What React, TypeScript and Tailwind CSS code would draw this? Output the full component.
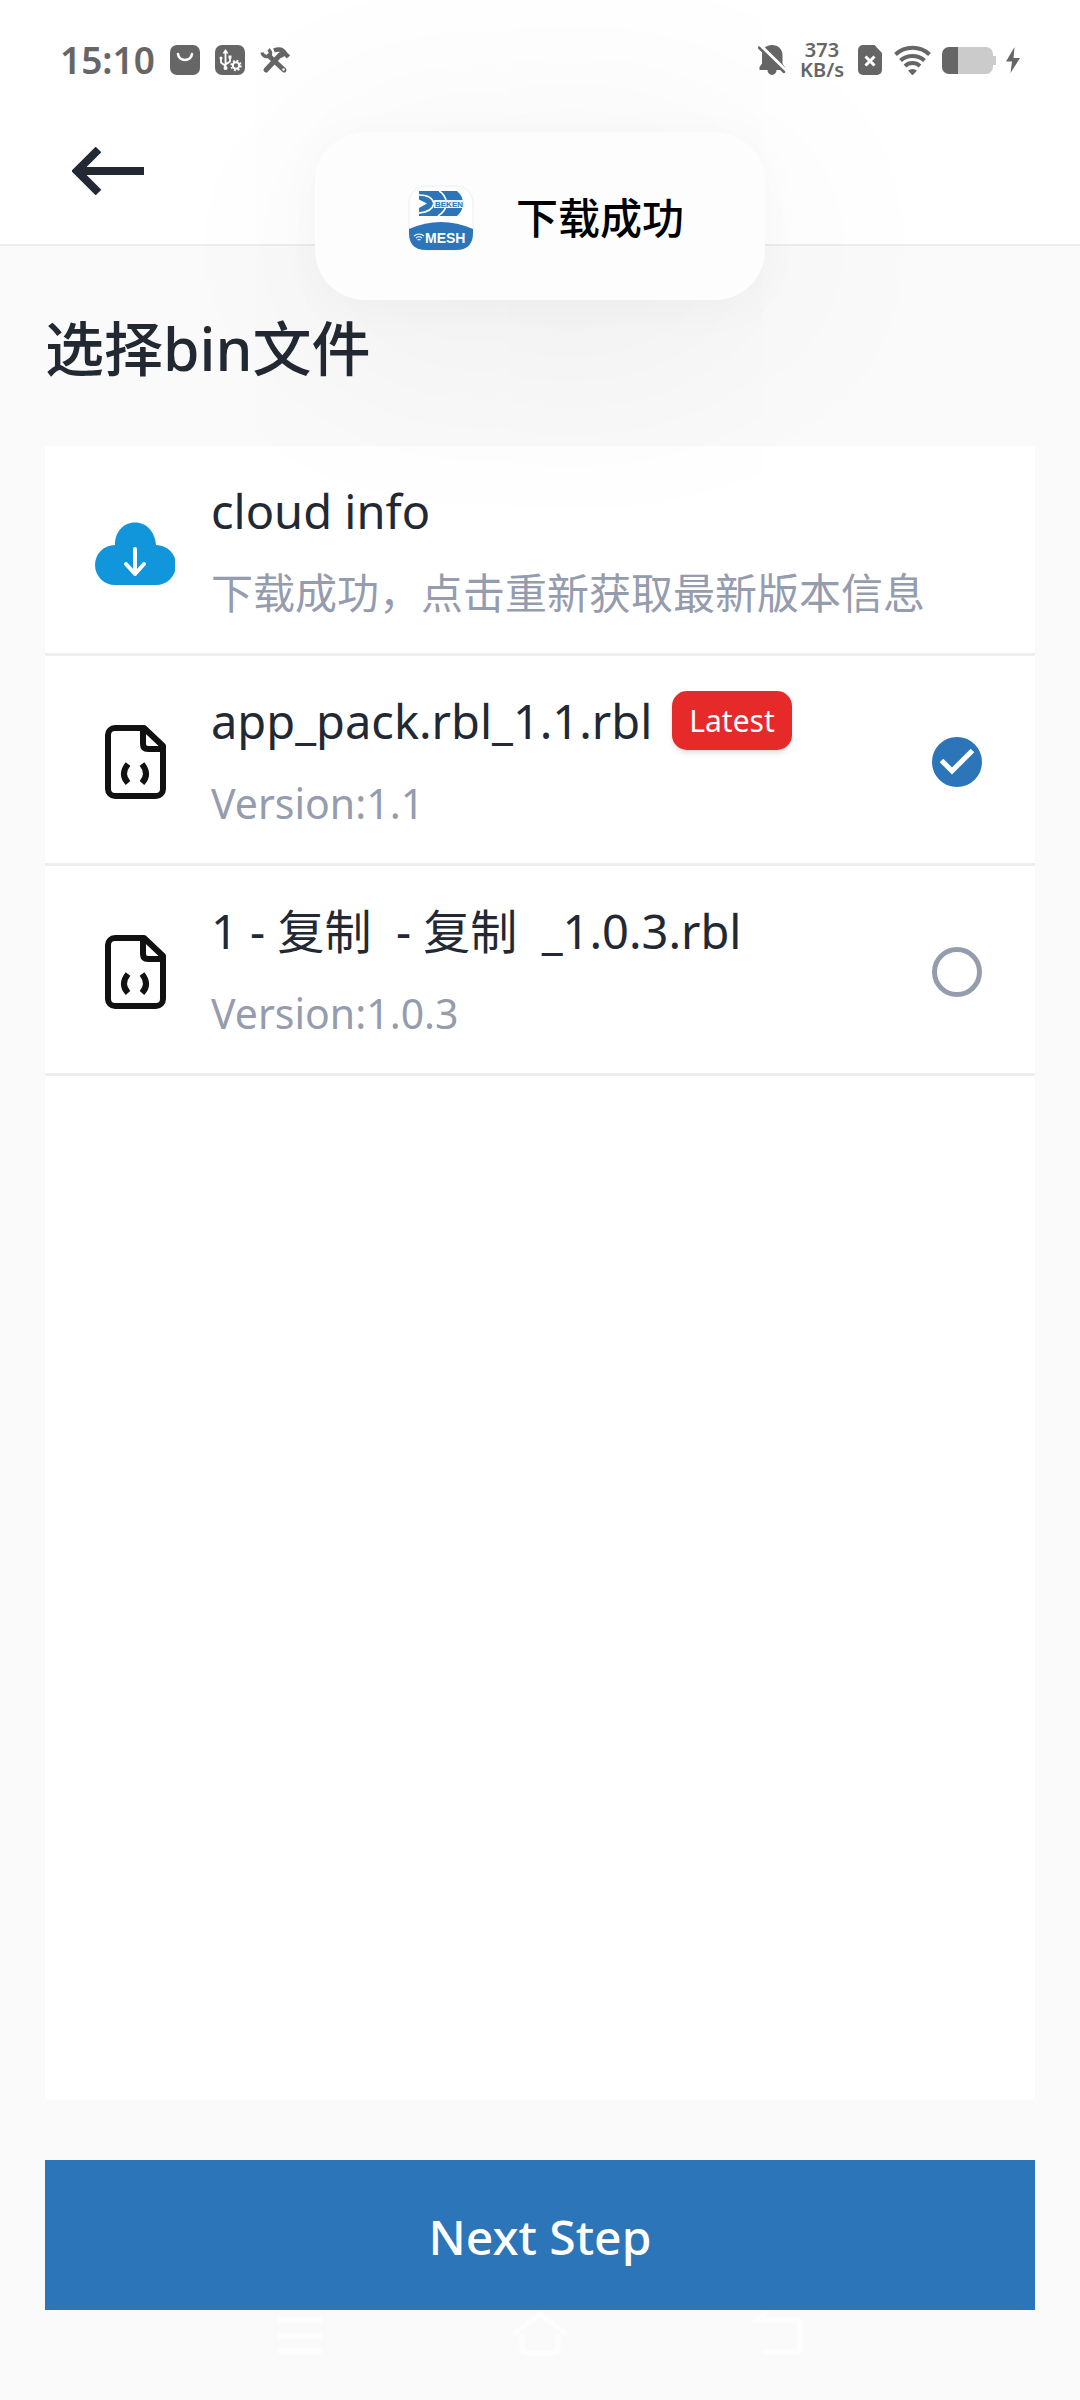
import { useState } from "react";

interface BinFile {
  id: string;
  name: string;
  version: string;
  latest?: boolean;
}

const files: BinFile[] = [
  { id: "f1", name: "app_pack.rbl_1.1.rbl", version: "1.1", latest: true },
  { id: "f2", name: "1 - 复制  - 复制  _1.0.3.rbl", version: "1.0.3" },
];

const StatusBar = () => (
  <div className="flex h-[98px] items-center justify-between pt-[22px] pr-[59px] pl-[60px] text-[#666666]">
    <div className="flex items-center gap-[15px]">
      <span className="text-[37px] leading-[44px] font-semibold">15:10</span>
      <svg className="size-[30px]" viewBox="0 0 30 30" fill="none">
        <rect width="30" height="30" rx="7" fill="currentColor" />
        <path d="M8 9c1 8 13 8 14 0" stroke="#fff" strokeWidth="2.6" strokeLinecap="round" />
      </svg>
      <svg className="size-[30px]" viewBox="0 0 30 30" fill="none" stroke="#fff">
        <rect width="30" height="30" rx="7" fill="currentColor" stroke="none" />
        <path d="M10.5 7v16M6 13v4.500l4.500 3.500M15 12v4.500l-4.500 3" strokeWidth="1.8" />
        <path d="M10.500 4l3 4.500h-6z" fill="#fff" stroke="none" />
        <circle cx="10.500" cy="23" r="2" fill="#fff" stroke="none" />
        <circle cx="6" cy="13" r="1.500" fill="#fff" stroke="none" />
        <rect x="13.500" y="10.500" width="3" height="3" fill="#fff" stroke="none" />
        <circle cx="21" cy="20.500" r="3.200" strokeWidth="2" />
        <circle cx="21" cy="20.500" r="4.800" strokeWidth="1.800" strokeDasharray="1.880 1.880" />
      </svg>
      <svg className="size-[30px]" viewBox="0 0 30 30" fill="none" stroke="currentColor">
        <path d="M9 11l15 14" strokeWidth="5" strokeLinecap="round" />
        <path d="M6 25L20 10" strokeWidth="5" strokeLinecap="round" />
        <path d="M2 7.500a5 5 0 0 0 8.500 2.500M8.500 4.500a5 5 0 0 1 1.500 6" strokeWidth="3.400" />
        <path d="M14 5.500c5-2 9-1 11.500 3.500l3 3" strokeWidth="4.500" />
        <path d="M18 9l4-3 3 5-4 2z" fill="currentColor" stroke="none" />
        <circle cx="23.500" cy="24.500" r="1.200" fill="#fff" stroke="none" />
      </svg>
    </div>
    <div className="flex items-center">
      <svg className="h-[30px] w-7" viewBox="0 0 28 30">
        <path
          fill="currentColor"
          d="M14 0c6 0 10.500 4 10.500 10v8.500l3 4.500V25h-9a4.500 5 0 0 1-9 0H1.500v-3L4 18.500V10C4 4 8 0 14 0z"
        />
        <path d="M2.500 1L28 26" stroke="#fefefe" strokeWidth="4" />
        <path d="M.8 2.500L26 27" stroke="currentColor" strokeWidth="2.500" strokeLinecap="round" />
      </svg>
      <span className="ml-3.5 text-center text-[20px] leading-[20px] font-semibold">
        373
        <br />
        KB/s
      </span>
      <svg className="ml-3.5 h-[30px] w-6" viewBox="0 0 24 30">
        <path
          fill="currentColor"
          d="M5 0h11.500L24 8v17a5 5 0 0 1-5 5H5a5 5 0 0 1-5-5V5a5 5 0 0 1 5-5z"
        />
        <path d="M7.500 11.500l9 9m0-9l-9 9" stroke="#fff" strokeWidth="3" />
      </svg>
      <svg className="ml-3 h-[30px] w-[37px]" viewBox="0 0 37 30" fill="none">
        <g stroke="currentColor" strokeWidth="4">
          <path d="M1.500 9.500a25 25 0 0 1 34 0" />
          <path d="M6.500 15.500a18 18 0 0 1 24 0" />
          <path d="M11 21a11 11 0 0 1 15 0" />
        </g>
        <path d="M14 25.500q4.500-3 9 0l-4.500 5z" fill="currentColor" />
      </svg>
      <svg className="ml-[11px] h-[27px] w-[54px]" viewBox="0 0 54 27">
        <path d="M16 0h28a7 7 0 0 1 7 7v2h3v9h-3v2a7 7 0 0 1-7 7H16z" fill="#cbcbcb" />
        <path d="M7 0h9v27H7a7 7 0 0 1-7-7V7a7 7 0 0 1 7-7z" fill="currentColor" />
      </svg>
      <svg className="ml-[9px] h-7 w-4" viewBox="0 0 16 28">
        <path d="M9.500 1L1 15.500h6L5.500 27 15 12H8.500z" fill="currentColor" />
      </svg>
    </div>
  </div>
);

const AppLogo = () => (
  <svg className="size-[66px]" viewBox="0 0 66 66">
    <rect x="1" y="1" width="64" height="64" rx="17" fill="#fff" stroke="#eeeeee" />
    <path d="M1 44q32-14 64 0v4q0 17-17 17H18Q1 65 1 48z" fill="#2c75b9" />
    <path d="M11 6h38q6 5 6 12.500T49 31H11v-8l8-4.500-8-4z" fill="#2c75b9" />
    <g fill="none" stroke="#fff" strokeWidth="1.600">
      <path d="M11 10q13 0 15 8.500Q24 27 11 28" />
      <path d="M31 6q6 3 8 12.500Q37 27 30 31" />
    </g>
    <path d="M26 15h30v8H26z" fill="#e9f1f8" />
    <text
      x="27"
      y="22"
      fontSize="8"
      fontWeight="700"
      fontFamily="Liberation Sans, sans-serif"
      fill="#2c75b9"
    >
      BEKEN
    </text>
    <text
      x="17"
      y="58"
      fontSize="14"
      fontWeight="700"
      fontFamily="Liberation Sans, sans-serif"
      fill="#fff"
    >
      MESH
    </text>
    <g fill="none" stroke="#fff" strokeWidth="1.200">
      <path d="M6 51q5-4 10 0M8 53q3-2.500 6 0M9.500 55q1.500-1 3 0" />
    </g>
  </svg>
);

const CloudIcon = () => (
  <svg className="h-[68px] w-20 shrink-0" viewBox="0 -4 80 68">
    <path
      fill="#1296db"
      d="M20 63a20 20 0 0 1 0-40C20 10 28 .5 40 .5S60 10 61 23a20 20 0 0 1 0 40z"
    />
    <path
      d="M40 27v25m-9-10l9 10 9-10"
      fill="none"
      stroke="#fff"
      strokeWidth="4"
      strokeLinecap="round"
      strokeLinejoin="round"
    />
  </svg>
);

const FileIcon = () => (
  <svg className="h-[74px] w-20 shrink-0" viewBox="-1 0 80 74" fill="none" stroke="#111111">
    <path
      d="M19 3h29l19 18v43a7 7 0 0 1-7 7H19a7 7 0 0 1-7-7V10a7 7 0 0 1 7-7z"
      strokeWidth="6"
      strokeLinejoin="round"
    />
    <path d="M47 3v16q0 5 5 5h16" strokeWidth="6" />
    <path d="M32 39q-8 10 0 19M46 39q8 10 0 19" strokeWidth="6" />
  </svg>
);

const App = () => {
  const [selected, setSelected] = useState("f1");
  const [toast] = useState("下载成功");

  return (
    <div className="flex min-h-screen flex-col bg-[#fafafa] font-['Noto_Sans','Noto_Sans_CJK_SC',sans-serif] text-[#222933]">
      <header className="border-b-2 border-[#ededed] bg-white">
        <StatusBar />
        <div className="flex h-[146px] items-center pl-[72px]">
          <button type="button" aria-label="返回">
            <svg className="h-12 w-[72px]" viewBox="0 0 72 48" fill="none">
              <path d="M4 24h68M26.500 2.500L5 24l21.500 21.500" stroke="currentColor" strokeWidth="8" />
            </svg>
          </button>
        </div>
      </header>

      {toast && (
        <div
          role="status"
          className="absolute top-[132px] left-1/2 flex h-[168px] w-[450px] -translate-x-1/2 items-center justify-center gap-[42px] rounded-[50px] bg-[#fdfdfd] pt-1 pl-3 text-[42px] leading-[60px] font-medium text-black shadow-[0_8px_48px_rgba(0,0,0,0.03),0_30px_240px_rgba(0,0,0,0.07)]"
        >
          <AppLogo />
          {toast}
        </div>
      )}

      <main className="flex flex-1 flex-col px-[45px] pb-[90px]">
        <h1 className="pt-[62px] pb-[58px] text-[59px] leading-[80px] font-medium">
          选择bin文件
        </h1>

        <div className="flex-1 bg-white">
          <button
            type="button"
            className="flex h-[210px] w-full items-center gap-9 border-b-[3px] border-[#eeeeee] pt-1 pl-[50px] text-left"
          >
            <CloudIcon />
            <span className="flex flex-col gap-3">
              <span className="text-[47px] leading-[70px]">cloud info</span>
              <span className="text-[42px] leading-[70px] text-[#959cae]">
                下载成功，点击重新获取最新版本信息
              </span>
            </span>
          </button>

          {files.map((file) => (
            <label
              key={file.id}
              className="flex h-[210px] items-center gap-9 border-b-[3px] border-[#eeeeee] pt-1 pr-[53px] pl-[50px]"
            >
              <FileIcon />
              <span className="flex flex-1 flex-col gap-3">
                <span className="flex items-center gap-5">
                  <span className="text-[47px] leading-[70px] whitespace-pre">{file.name}</span>
                  {file.latest && (
                    <span className="flex h-[59px] items-center rounded-[15px] bg-[#e62a2a] px-[17px] text-[30px] text-white shadow-md">
                      Latest
                    </span>
                  )}
                </span>
                <span className="text-[41px] leading-[70px] text-[#959cae]">
                  Version:{file.version}
                </span>
              </span>
              <span className="grid">
                <input
                  type="radio"
                  name="bin"
                  checked={selected === file.id}
                  onChange={() => setSelected(file.id)}
                  className="col-start-1 row-start-1 size-[50px] appearance-none rounded-full border-[5px] border-[#959cae] checked:border-[#2c75b9] checked:bg-[#2c75b9]"
                />
                {selected === file.id && (
                  <svg
                    className="pointer-events-none col-start-1 row-start-1 size-[50px]"
                    viewBox="0 0 50 50"
                    fill="none"
                  >
                    <path d="M9.500 23.500L20 34l20.500-20.500" stroke="#fff" strokeWidth="5" />
                  </svg>
                )}
              </span>
            </label>
          ))}
        </div>

        <button
          type="button"
          className="mt-[60px] h-[150px] bg-[#2c75b9] pt-1 text-[48px] leading-[70px] font-medium text-white"
        >
          Next Step
        </button>
      </main>

      {/* system navigation keys, barely visible on the light background */}
      <nav className="absolute bottom-[42px] left-0 flex w-full justify-center gap-[184px] text-[#fdfdfd]">
        <svg className="h-12 w-[56px]" viewBox="0 0 56 48" fill="none">
          <path d="M6 10h44M6 26h44M6 41h44" stroke="currentColor" strokeWidth="6" />
        </svg>
        <svg className="h-12 w-[56px]" viewBox="0 0 56 48" fill="none">
          <path
            d="M2 24L28 4l26 20M10 24v15q0 4 4 4h28q4 0 4-4V24"
            stroke="currentColor"
            strokeWidth="5"
          />
        </svg>
        <svg className="h-12 w-[56px]" viewBox="0 0 56 48" fill="none">
          <path d="M10 42h33q5 0 5-5V15q0-5-5-5H5l10-8" stroke="currentColor" strokeWidth="5" />
        </svg>
      </nav>
    </div>
  );
};

export default App;
